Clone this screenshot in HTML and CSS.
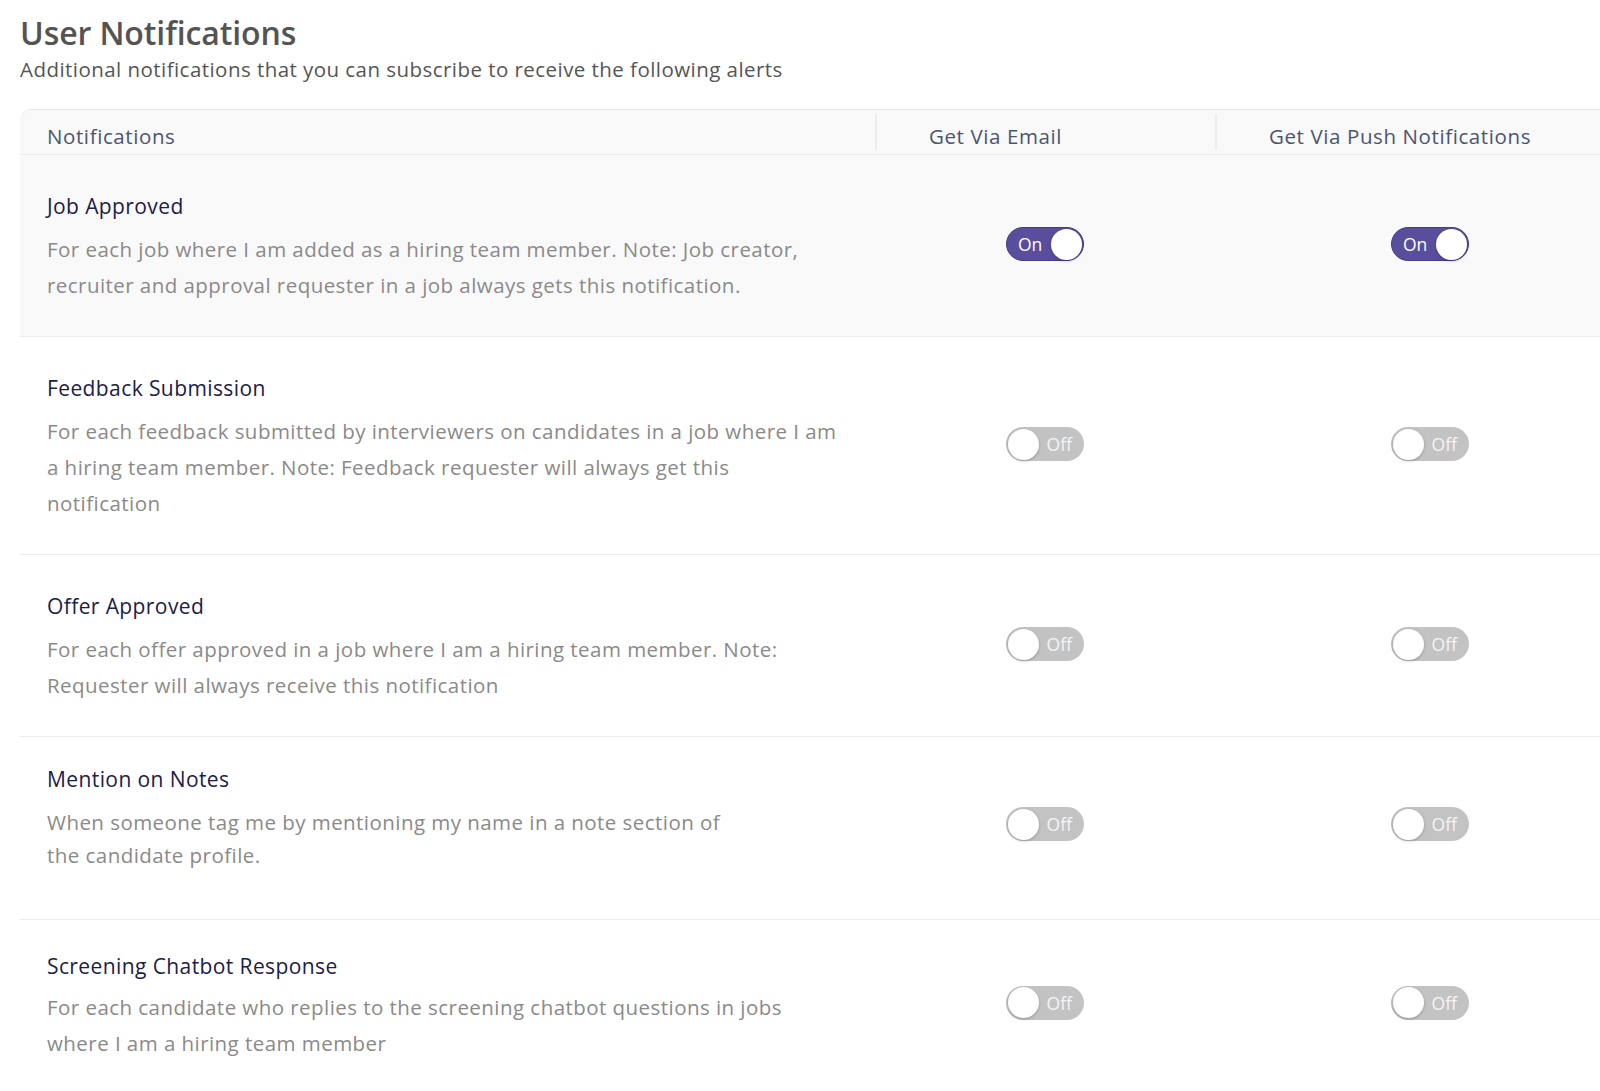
FILE: index.html
```html
<!doctype html>
<html>
    <head>
        <meta charset="utf-8">
        <title>User Notifications</title>
        <link rel="stylesheet" href="styles.css">
    </head>
    <body>

        <div class="page">

            <h1 class="page-title">User Notifications</h1>
            <p class="page-subtitle">Additional notifications that you can subscribe to receive the following alerts</p>

            <div class="notify-table">

                <div class="notify-head">
                    <div class="head-cell">Notifications</div>
                    <div class="head-cell head-cell-sep">Get Via Email</div>
                    <div class="head-cell head-cell-sep">Get Via Push Notifications</div>
                </div>

                <div class="notify-row notify-row-active">
                    <div class="notify-info">
                        <div class="notify-name">Job Approved</div>
                        <p class="notify-desc">For each job where I am added as a hiring team member. Note: Job creator, recruiter and approval requester in a job always gets this notification.</p>
                    </div>
                    <div class="notify-switch"><span class="toggle toggle-on"><span class="toggle-label">On</span><span class="toggle-knob"></span></span></div>
                    <div class="notify-switch"><span class="toggle toggle-on"><span class="toggle-label">On</span><span class="toggle-knob"></span></span></div>
                </div>

                <div class="notify-row">
                    <div class="notify-info">
                        <div class="notify-name">Feedback Submission</div>
                        <p class="notify-desc">For each feedback submitted by interviewers on candidates in a job where I am a hiring team member. Note: Feedback requester will always get this notification</p>
                    </div>
                    <div class="notify-switch"><span class="toggle"><span class="toggle-knob"></span><span class="toggle-label">Off</span></span></div>
                    <div class="notify-switch"><span class="toggle"><span class="toggle-knob"></span><span class="toggle-label">Off</span></span></div>
                </div>

                <div class="notify-row">
                    <div class="notify-info">
                        <div class="notify-name">Offer Approved</div>
                        <p class="notify-desc">For each offer approved in a job where I am a hiring team member. Note: Requester will always receive this notification</p>
                    </div>
                    <div class="notify-switch"><span class="toggle"><span class="toggle-knob"></span><span class="toggle-label">Off</span></span></div>
                    <div class="notify-switch"><span class="toggle"><span class="toggle-knob"></span><span class="toggle-label">Off</span></span></div>
                </div>

                <div class="notify-row notify-row-compact">
                    <div class="notify-info">
                        <div class="notify-name">Mention on Notes</div>
                        <p class="notify-desc">When someone tag me by mentioning my name in a note section of<br>the candidate profile.</p>
                    </div>
                    <div class="notify-switch"><span class="toggle"><span class="toggle-knob"></span><span class="toggle-label">Off</span></span></div>
                    <div class="notify-switch"><span class="toggle"><span class="toggle-knob"></span><span class="toggle-label">Off</span></span></div>
                </div>

                <div class="notify-row notify-row-last">
                    <div class="notify-info">
                        <div class="notify-name">Screening Chatbot Response</div>
                        <p class="notify-desc">For each candidate who replies to the screening chatbot questions in jobs where I am a hiring team member</p>
                    </div>
                    <div class="notify-switch"><span class="toggle"><span class="toggle-knob"></span><span class="toggle-label">Off</span></span></div>
                    <div class="notify-switch"><span class="toggle"><span class="toggle-knob"></span><span class="toggle-label">Off</span></span></div>
                </div>

            </div>
        </div>

    </body>
</html>
```

FILE: styles.css
```css
html,
body {
    margin: 0;
    overflow: hidden;
    background: #fff;
}

body {
    font-family: "Open Sans", "Lato", sans-serif;
    color: #555;
}

.page {
    padding: 14px 0 0 20px;
    overflow: hidden;
}

.page-title {
    margin: 0;
    font-size: 32px;
    line-height: 38px;
    font-weight: 600;
    color: #545454;
    letter-spacing: -0.1px;
}

.page-subtitle {
    margin: 0;
    font-size: 20.5px;
    line-height: 34px;
    letter-spacing: 0.45px;
    color: #555;
}

.notify-table {
    margin-top: 23px;
    width: 1625px;
}

.notify-head,
.notify-row {
    display: grid;
    grid-template-columns: 855px 340px 430px;
}

.notify-head {
    box-sizing: border-box;
    height: 46px;
    padding-bottom: 4px;
    align-items: end;
    background: #f9f9f9;
    border-top: 1px solid #e6e6e6;
    border-bottom: 1px solid #ececec;
    border-top-left-radius: 12px;
}

.head-cell {
    padding: 8px 0 0 27px;
    font-size: 20.5px;
    line-height: 28px;
    letter-spacing: 0.6px;
    color: #4b566e;
}

.head-cell-sep {
    padding-left: 52px;
    border-left: 2px solid #ececec;
}

.notify-row {
    border-bottom: 1px solid #ececec;
    align-items: center;
}

.notify-row-active {
    background: #f9f9f9;
}

.notify-info {
    padding: 38px 34px 33px 27px;
}

.notify-row-compact .notify-info {
    padding-top: 29px;
    padding-bottom: 47px;
}

.notify-row-compact .notify-desc {
    line-height: 33px;
    margin-top: 14px;
}

.notify-row-compact .notify-switch {
    padding-bottom: 8px;
}

.notify-row-last {
    border-bottom: none;
}

.notify-row-last .notify-info {
    padding-top: 33px;
}

.notify-row-last .notify-desc {
    margin-top: 10px;
}

.notify-row-last .notify-switch {
    padding-bottom: 9px;
}

.notify-name {
    font-size: 21px;
    line-height: 26px;
    letter-spacing: 0.4px;
    color: #1b2048;
}

.notify-desc {
    margin: 12px 0 0;
    font-size: 20.5px;
    line-height: 36px;
    letter-spacing: 0.45px;
    color: #8a8a8a;
}

.notify-switch {
    display: flex;
    justify-content: center;
    padding-bottom: 3px;
}

/* Toggle switch */
.toggle {
    display: inline-flex;
    align-items: center;
    justify-content: space-between;
    box-sizing: border-box;
    width: 78px;
    height: 34px;
    padding: 0 2px;
    border-radius: 17px;
    background: #c3c3c3;
}

.toggle-knob {
    width: 31px;
    height: 31px;
    border-radius: 50%;
    background: #fff;
    box-shadow: 0 1px 3px rgba(0, 0, 0, .25);
}

.toggle-label {
    font-size: 17.5px;
    color: #f4f4f4;
    padding: 0 10px 0 6px;
}

.toggle-on {
    background: #584e9b;
    border: 1px solid #463c8c;
    padding: 0 1px;
}

.toggle-on .toggle-label {
    color: #fff;
    padding: 0 6px 0 10px;
}
```
